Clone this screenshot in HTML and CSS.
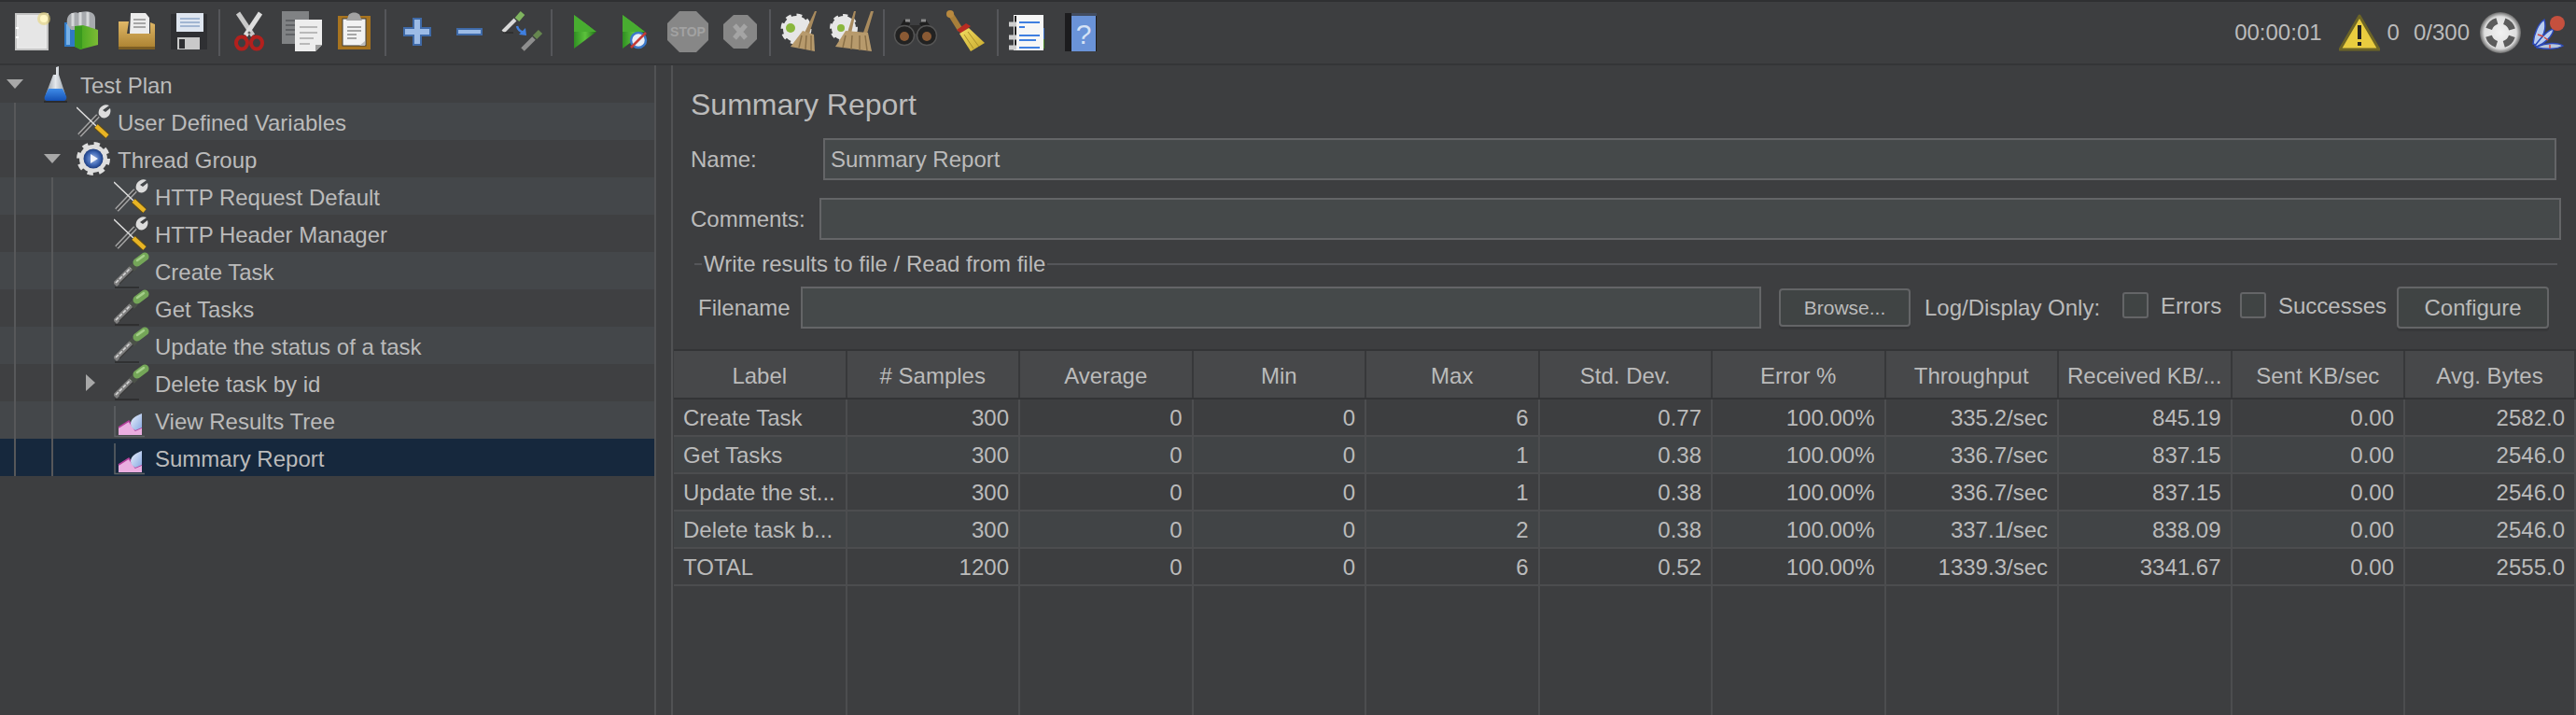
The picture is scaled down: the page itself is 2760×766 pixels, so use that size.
FILE: index.html
```html
<!DOCTYPE html>
<html lang="en">
<head>
<meta charset="utf-8">
<title>Summary Report</title>
<link rel="stylesheet" href="styles.css">
</head>
<body>
<svg class="defs" aria-hidden="true">
<defs>
<linearGradient id="gPlay" x1="0" y1="0" x2="1" y2="0"><stop offset="0" stop-color="#2f8f22"/><stop offset=".5" stop-color="#5cc23c"/><stop offset="1" stop-color="#1f6f18"/></linearGradient>
<linearGradient id="gFolder" x1="0" y1="0" x2="0" y2="1"><stop offset="0" stop-color="#e0b868"/><stop offset="1" stop-color="#a97f2e"/></linearGradient>
<linearGradient id="gGreen" x1="0" y1="0" x2="1" y2="0"><stop offset="0" stop-color="#39a31c"/><stop offset="1" stop-color="#7dbb35"/></linearGradient>
<linearGradient id="gBroom" x1="0" y1="0" x2="1" y2="1"><stop offset="0" stop-color="#f1dd62"/><stop offset="1" stop-color="#c9a92c"/></linearGradient>
<linearGradient id="gGlass" x1="0" y1="0" x2="1" y2="0"><stop offset="0" stop-color="#8f98a2"/><stop offset=".5" stop-color="#e4e8ec"/><stop offset="1" stop-color="#9aa2ab"/></linearGradient>
<linearGradient id="gLiquid" x1="0" y1="0" x2="0" y2="1"><stop offset="0" stop-color="#3f8ce8"/><stop offset="1" stop-color="#1450b4"/></linearGradient>
<linearGradient id="gLeaf" x1="0" y1="0" x2="1" y2="1"><stop offset="0" stop-color="#eef3fc"/><stop offset="1" stop-color="#86a8e2"/></linearGradient>
<radialGradient id="gLaf"><stop offset="0" stop-color="#f2f2f2"/><stop offset=".78" stop-color="#dedede"/><stop offset="1" stop-color="#6a6a6a"/></radialGradient>
<radialGradient id="gHub"><stop offset="0" stop-color="#9db6e6"/><stop offset=".65" stop-color="#3f67b4"/><stop offset="1" stop-color="#1d3d80"/></radialGradient>
<symbol id="wrench" viewBox="0 0 44 40">
<path d="M3 35 L23 14" stroke="#a4a4a4" stroke-width="5" fill="none"/>
<path d="M3 35 L23 14" stroke="#3f4042" stroke-width="2" fill="none"/>
<path d="M35 3 C29 0 22 6 24 13 L27 16 C33 18 38 12 36 6 L31 10 L28 8 Z" fill="#dcdcdc"/>
<path d="M0 5 L21 25" stroke="#e0e0e0" stroke-width="1.5" fill="none"/>
<path d="M21 25 L33 36" stroke="#5e4c18" stroke-width="6.5" fill="none"/>
<path d="M21 25 L33 36" stroke="#e8b424" stroke-width="4.5" fill="none"/>
</symbol>
<symbol id="dropper" viewBox="0 0 44 40">
<path d="M1 38 H27" stroke="#2a2a2a" stroke-width="2" opacity=".75"/>
<path d="M1 35 L20 16" stroke="#7f7f7f" stroke-width="6" fill="none"/>
<path d="M2 33 L19 16" stroke="#d6d6d6" stroke-width="1.6" stroke-dasharray="4 1.5" fill="none"/>
<path d="M6 34 L21 19" stroke="#3a3a3a" stroke-width="1.2" fill="none"/>
<path d="M19 18 L23 14" stroke="#4b5148" stroke-width="8" fill="none"/>
<path d="M25 11 L33 5" stroke="#74a658" stroke-width="9" stroke-linecap="round" fill="none"/>
<path d="M25 9 L32 4" stroke="#a5d08a" stroke-width="2.5" stroke-linecap="round" fill="none"/>
</symbol>
<symbol id="graph" viewBox="0 0 44 40">
<path d="M1 5 V37.5 H33" stroke="#5f6366" stroke-width="1.5" fill="none"/>
<path d="M5 36 V28 L16 21 L23 31 L30 28 V36 Z" fill="#eaaee0"/>
<path d="M5 28 L16 21 L23 31 L30 28" stroke="#b4409c" stroke-width="1.5" fill="none"/>
<path d="M18 24 C18 18 25 15 30 13 V28 L23 31 C20 29 18 27 18 24 Z" fill="url(#gLeaf)"/>
</symbol>
</defs>
</svg>

<header class="toolbar">
<svg class="tool" viewBox="0 0 56 68"><rect x="11" y="15" width="34" height="38" fill="#e8e8e8" stroke="#c4c4c4" stroke-width="2"/><rect x="14" y="18" width="28" height="32" fill="#e6e6e6"/><rect x="11" y="29" width="3" height="2" fill="#fff"/><rect x="11" y="39" width="3" height="2" fill="#fff"/><circle cx="41" cy="20" r="7" fill="#e8d678" opacity=".6"/><circle cx="41" cy="20" r="4" fill="#fff7c4"/></svg>
<svg class="tool" viewBox="0 0 56 68"><rect x="7" y="24" width="18" height="26" fill="#2f78c4"/><rect x="9" y="26" width="4" height="22" fill="#79b1e6"/><path d="M10 26 C8 14 18 12 22 14 C28 11 40 11 40 20 L40 32 L14 32 Z" fill="#a7aaae"/><path d="M16 14 V28 M24 13 V28 M32 13 V28" stroke="#d6d8da" stroke-width="3"/><path d="M18 28 L27 27 L43 32 V48 L24 53 L18 50 Z" fill="url(#gGreen)"/><path d="M18 28 H26 V53 L18 50 Z" fill="#3a9a1e"/></svg>
<svg class="tool" viewBox="0 0 56 68"><path d="M22 14 H38 L42 19 V36 H21 Z" fill="#ececec"/><path d="M25 21 H38 M25 25 H38 M25 29 H38" stroke="#8f8f8f" stroke-width="1.5"/><path d="M9 23 H20 L18 36 H43 V24 L48 26 V53 H9 Z" fill="url(#gFolder)"/><path d="M9 50 H48 V53 H9 Z" fill="#7d5e24"/></svg>
<svg class="tool" viewBox="0 0 56 68"><path d="M9 15 H48 V53 H9 Z" fill="#2f3033"/><rect x="15" y="14" width="29" height="20" fill="#dfe6f0"/><path d="M19 20 H40 M19 24 H40 M19 28 H40" stroke="#8ea6c8" stroke-width="1.5"/><rect x="16" y="40" width="24" height="13" fill="#c9c9c9"/><rect x="18" y="42" width="6" height="10" fill="#2f3033"/></svg>
<i class="sep"></i>
<svg class="tool" viewBox="0 0 56 68"><path d="M15 14 L31 38" stroke="#c9c9c9" stroke-width="5"/><path d="M39 14 L23 38" stroke="#dedede" stroke-width="5"/><circle cx="27" cy="35" r="1.5" fill="#666"/><ellipse cx="19" cy="46" rx="6" ry="6.5" fill="none" stroke="#b3201d" stroke-width="4"/><ellipse cx="35" cy="46" rx="6" ry="6.5" fill="none" stroke="#b3201d" stroke-width="4"/><path d="M24 39 L21 41 M30 39 L33 41" stroke="#b3201d" stroke-width="4"/></svg>
<svg class="tool" viewBox="0 0 56 68"><rect x="6" y="12" width="29" height="35" fill="#808284"/><path d="M10 22 H20 M10 27 H20 M10 32 H20 M10 37 H20" stroke="#606265" stroke-width="2"/><path d="M20 21 H49 V48 L42 55 H20 Z" fill="#ededed"/><path d="M25 29 H44 M25 35 H44 M25 41 H40 M25 47 H36" stroke="#a8a8a8" stroke-width="1.5"/><path d="M49 48 H42 V55 Z" fill="#9c9c9c"/></svg>
<svg class="tool" viewBox="0 0 56 68"><rect x="10" y="17" width="35" height="36" fill="#a8741f"/><rect x="15" y="20" width="25" height="29" fill="#f2f2f2" stroke="#3b3b3b" stroke-width="1"/><path d="M20 29 H35 M20 33 H35 M20 37 H30 M20 41 H30" stroke="#8f8f8f" stroke-width="1.5"/><path d="M21 18 C21 12 34 12 34 18 L36 22 H19 Z" fill="#a2a2a2"/><path d="M39 44 L33 49 H39 Z" fill="#bdbdbd"/></svg>
<i class="sep"></i>
<svg class="tool" viewBox="0 0 56 68"><path d="M25 20 H33 V30 H43 V38 H33 V48 H25 V38 H15 V30 H25 Z" fill="#9cbbe6" stroke="#3f6aa8" stroke-width="2"/></svg>
<svg class="tool" viewBox="0 0 56 68"><rect x="16" y="31" width="26" height="6" fill="#9cbbe6" stroke="#3f6aa8" stroke-width="2"/></svg>
<svg class="tool" viewBox="0 0 56 68"><path d="M9 34 L22 21" stroke="#d9d9d9" stroke-width="4"/><path d="M24 21 L30 14" stroke="#7fb45f" stroke-width="6"/><path d="M9 35 H20" stroke="#2b2b2b" stroke-width="1.5"/><path d="M24 28 C25 32 28 34 31 35" stroke="#3f7fe0" stroke-width="2.5" fill="none"/><path d="M34 38 L26 37 L33 30 Z" fill="#3f7fe0"/><path d="M30 53 L42 41" stroke="#8e8e8e" stroke-width="5"/><path d="M43 40 L49 34" stroke="#66864f" stroke-width="6"/></svg>
<i class="sep"></i>
<svg class="tool" viewBox="0 0 56 68"><path d="M19 16 L43 34 L19 52 Z" fill="url(#gPlay)"/><path d="M19 16 L43 34 H19 Z" fill="#48ad30"/></svg>
<svg class="tool" viewBox="0 0 56 68"><path d="M15 16 L39 34 L15 52 Z" fill="url(#gPlay)"/><path d="M15 16 L39 34 H15 Z" fill="#48ad30"/><circle cx="32" cy="43" r="8" fill="#e8eef6" stroke="#3b78c8" stroke-width="2.5"/><path d="M24 51 L40 35" stroke="#c53b38" stroke-width="2.5"/></svg>
<svg class="tool" viewBox="0 0 56 68"><path d="M20 12 H38 L51 25 V43 L38 56 H20 L7 43 V25 Z" fill="#878787"/><text class="stoptxt" x="29" y="39">STOP</text></svg>
<svg class="tool" viewBox="0 0 56 68"><path d="M22 16 H37 L47 26 V42 L37 52 H22 L11 42 V26 Z" fill="#878787"/><path d="M23 27 L35 41 M35 27 L23 41" stroke="#a4a4a4" stroke-width="5"/></svg>
<i class="sep"></i>
<svg class="tool" viewBox="0 0 56 68"><circle cx="23" cy="31" r="14" fill="#e6e6e6" stroke="#e6e6e6" stroke-width="5" stroke-dasharray="5.5 5.5"/><circle cx="17" cy="30" r="5" fill="#8ab73d"/><path d="M45 12 L37 36 L32 35 L43 12 Z" fill="#a98b5e"/><path d="M30 33 L42 37 L43 55 L17 50 Z" fill="#b79a6c"/><path d="M29 38 L26 51 M34 38 L33 53 M39 38 L39 54" stroke="#8a7048" stroke-width="1.5"/></svg>
<svg class="tool" viewBox="0 0 56 68"><circle cx="18" cy="30" r="13" fill="#e6e6e6" stroke="#e6e6e6" stroke-width="4" stroke-dasharray="5 5"/><circle cx="15" cy="30" r="4" fill="#8ab73d"/><path d="M31 12 L26 36 L22 35 L29 12 Z" fill="#a98b5e"/><path d="M50 12 L43 36 L39 35 L47 12 Z" fill="#a98b5e"/><path d="M20 33 L44 35 L48 55 L9 50 Z" fill="#b79a6c"/><path d="M20 38 L17 51 M27 38 L26 53 M35 38 L35 54 M41 38 L43 54" stroke="#8a7048" stroke-width="1.5"/></svg>
<i class="sep"></i>
<svg class="tool" viewBox="0 0 56 68"><path d="M20 23 L12 36 M36 23 L46 36" stroke="#1f1f1f" stroke-width="8"/><path d="M18 22 H23 M35 22 H40" stroke="#8a8a8a" stroke-width="3"/><rect x="23" y="27" width="12" height="9" fill="#2b2b2b"/><circle cx="17" cy="38" r="10.5" fill="#222" stroke="#555" stroke-width="1.5"/><circle cx="41" cy="38" r="10.5" fill="#222" stroke="#555" stroke-width="1.5"/><circle cx="17" cy="39" r="5" fill="#8a5a34"/><circle cx="41" cy="39" r="5" fill="#8a5a34"/></svg>
<svg class="tool" viewBox="0 0 56 68"><path d="M11 16 L21 32" stroke="#a87f3a" stroke-width="6"/><circle cx="10" cy="15" r="4" fill="#b8893f"/><path d="M17 32 L27 25 L32 28 L22 36 Z" fill="#b82c22"/><path d="M20 36 L30 30 L47 46 L32 55 Z" fill="url(#gBroom)"/><path d="M25 37 L35 52 M29 34 L41 50" stroke="#a98f2a" stroke-width="1"/></svg>
<i class="sep"></i>
<svg class="tool" viewBox="0 0 56 68"><rect x="39" y="30" width="6" height="12" fill="#3a70c8"/><rect x="39" y="42" width="6" height="10" fill="#4c8b2c"/><rect x="12" y="16" width="32" height="38" fill="#f6f6f6"/><rect x="13" y="17" width="2" height="36" fill="#222"/><path d="M7 26 H15 M7 40 H15 M7 51 H15" stroke="#cfcfcf" stroke-width="5"/><path d="M18 24 H40 M18 29 H24 M18 38 H40 M18 43 H36 M18 51 H40" stroke="#3f7fe0" stroke-width="2"/></svg>
<svg class="tool" viewBox="0 0 56 68"><rect x="11" y="14" width="34" height="41" fill="#1c1c1e"/><rect x="18" y="17" width="26" height="38" fill="#6a93d8"/><path d="M11 14 H45 V17 H18 V14" fill="#5b6e8e" opacity=".6"/><text class="helptxt" x="31" y="47">?</text></svg>
<div class="status">
<span class="time">00:00:01</span>
<svg class="warn" viewBox="0 0 44 40"><path d="M22 2 L43 38 H1 Z" fill="#e9cd3f" stroke="#6d6526" stroke-width="3" stroke-linejoin="round"/><rect x="20" y="12" width="4" height="15" fill="#222"/><rect x="20" y="30" width="4" height="4" fill="#222"/></svg>
<span class="cnt">0</span>
<span class="threads">0/300</span>
<svg class="laf" viewBox="0 0 44 44"><circle cx="22" cy="22" r="22" fill="url(#gLaf)"/><circle cx="22" cy="22" r="13" fill="none" stroke="#5c5c5c" stroke-width="7" stroke-dasharray="12.4 8" stroke-dashoffset="-4"/></svg>
<svg class="feather" viewBox="0 0 38 36"><path d="M2 30 C3 18 8 8 14 4 C17 14 12 24 5 31 Z" fill="#b9cdf0" stroke="#2c49b8" stroke-width="1.5"/><path d="M4 32 C10 24 18 15 24 14 C23 22 14 30 6 33 Z" fill="#b9cdf0" stroke="#2c49b8" stroke-width="1.5"/><path d="M6 33 C16 29 28 28 34 32 C28 36 16 36 6 34 Z" fill="#b8c6d8" stroke="#2c49b8" stroke-width="1.5"/><path d="M7 20 L13 22 M14 23 L18 26 M20 31 V35" stroke="#d24a3d" stroke-width="1.5"/><circle cx="28" cy="8" r="8" fill="#c5503e"/></svg>
</div>
</header>

<div class="workspace">
<nav class="tree">
<div class="row plain"><span class="toggle open"></span><svg class="ico" viewBox="0 0 44 40"><path d="M18 2 L21 1 V10 L28 31 H7 L15 10 H18 Z" fill="url(#gGlass)"/><path d="M10 25 H25 L29 33 C30 36 28 38 26 38 H9 C6 38 5 36 6 33 Z" fill="url(#gLiquid)"/><path d="M5 39 H30" stroke="#26262a" stroke-width="1.5"/></svg><span>Test Plan</span></div>
<div class="row alt g1 lv2"><svg class="ico"><use href="#wrench"/></svg><span>User Defined Variables</span></div>
<div class="row plain g1 lv2t"><span class="toggle open"></span><svg class="ico" viewBox="0 0 44 40"><circle cx="18" cy="20" r="15" fill="#dedede" stroke="#dedede" stroke-width="6" stroke-dasharray="5.9 5.9"/><circle cx="18" cy="20" r="10.5" fill="url(#gHub)"/><path d="M15 15 L23 20 L15 25 Z" fill="#f0f3fa"/></svg><span>Thread Group</span></div>
<div class="row alt g2 lv3"><svg class="ico"><use href="#wrench"/></svg><span>HTTP Request Default</span></div>
<div class="row plain g2 lv3"><svg class="ico"><use href="#wrench"/></svg><span>HTTP Header Manager</span></div>
<div class="row alt g2 lv3"><svg class="ico"><use href="#dropper"/></svg><span>Create Task</span></div>
<div class="row plain g2 lv3"><svg class="ico"><use href="#dropper"/></svg><span>Get Tasks</span></div>
<div class="row alt g2 lv3"><svg class="ico"><use href="#dropper"/></svg><span>Update the status of a task</span></div>
<div class="row plain g2 lv3t"><span class="toggle closed"></span><svg class="ico"><use href="#dropper"/></svg><span>Delete task by id</span></div>
<div class="row alt g2 lv3"><svg class="ico"><use href="#graph"/></svg><span>View Results Tree</span></div>
<div class="row selected g2 lv3"><svg class="ico"><use href="#graph"/></svg><span>Summary Report</span></div>
</nav>
<div class="splitter"></div>
<main class="panel">
<h1 class="title">Summary Report</h1>
<div class="field name"><label class="name-label">Name:</label><div class="input">Summary Report</div></div>
<div class="field comments"><label class="comments-label">Comments:</label><div class="input"></div></div>
<div class="legend"><i class="legend-tick"></i><span>Write results to file / Read from file</span><i class="legend-line"></i></div>
<div class="file-row">
<label class="file-label">Filename</label>
<div class="input file-input"></div>
<button class="btn browse">Browse...</button>
<span class="log-label">Log/Display Only:</span>
<span class="check"></span><span class="check-label errors">Errors</span>
<span class="check"></span><span class="check-label">Successes</span>
<button class="btn configure">Configure</button>
</div>
<div class="table">
<div class="thead">
<div>Label</div><div># Samples</div><div>Average</div><div>Min</div><div>Max</div><div>Std. Dev.</div><div>Error %</div><div>Throughput</div><div>Received KB/...</div><div>Sent KB/sec</div><div>Avg. Bytes</div>
</div>
<div class="tr"><div>Create Task</div><div>300</div><div>0</div><div>0</div><div>6</div><div>0.77</div><div>100.00%</div><div>335.2/sec</div><div>845.19</div><div>0.00</div><div>2582.0</div></div>
<div class="tr odd"><div>Get Tasks</div><div>300</div><div>0</div><div>0</div><div>1</div><div>0.38</div><div>100.00%</div><div>336.7/sec</div><div>837.15</div><div>0.00</div><div>2546.0</div></div>
<div class="tr"><div>Update the st...</div><div>300</div><div>0</div><div>0</div><div>1</div><div>0.38</div><div>100.00%</div><div>336.7/sec</div><div>837.15</div><div>0.00</div><div>2546.0</div></div>
<div class="tr odd"><div>Delete task b...</div><div>300</div><div>0</div><div>0</div><div>2</div><div>0.38</div><div>100.00%</div><div>337.1/sec</div><div>838.09</div><div>0.00</div><div>2546.0</div></div>
<div class="tr"><div>TOTAL</div><div>1200</div><div>0</div><div>0</div><div>6</div><div>0.52</div><div>100.00%</div><div>1339.3/sec</div><div>3341.67</div><div>0.00</div><div>2555.0</div></div>
<div class="tr filler"><div></div><div></div><div></div><div></div><div></div><div></div><div></div><div></div><div></div><div></div><div></div></div>
</div>
</main>
</div>
</body>
</html>
```
FILE: styles.css
```css
* { box-sizing: border-box; }
html, body { margin: 0; height: 100%; }
body {
  width: 2760px;
  height: 766px;
  overflow: hidden;
  background: #3d3e40;
  color: #bbbbbb;
  font: 24px/1 "Liberation Sans", Arial, sans-serif;
  display: flex;
  flex-direction: column;
}
.defs { display: block; width: 0; height: 0; }

/* toolbar */
.toolbar {
  flex: none;
  height: 70px;
  display: flex;
  align-items: flex-start;
  padding-left: 6px;
  border-top: 2px solid #2f3032;
  border-bottom: 2px solid #343537;
}
.tool { flex: none; width: 56px; height: 68px; margin-top: -2px; }
.sep { flex: none; width: 2px; height: 50px; margin: 8px 4px 0 4px; background: #55565a; }
.stoptxt { font: bold 14px "Liberation Sans", sans-serif; fill: #a2a2a2; text-anchor: middle; }
.helptxt { font: 30px "Liberation Sans", sans-serif; fill: #d6e2f5; text-anchor: middle; }
.status { margin-left: auto; display: flex; align-items: center; height: 66px; padding-right: 10px; }
.time { margin-right: 18px; }
.warn { width: 44px; height: 40px; margin-right: 8px; }
.cnt { margin-right: 15px; }
.threads { margin-right: 11px; }
.laf { width: 44px; height: 44px; margin-right: 11px; }
.feather { width: 38px; height: 36px; }

/* layout */
.workspace { flex: 1; display: flex; min-height: 0; }
.tree { flex: none; width: 701px; }
.splitter {
  flex: none;
  width: 20px;
  border-left: 2px solid #515254;
  border-right: 2px solid #515254;
}
.panel { flex: 1; min-width: 0; display: flex; flex-direction: column; }

/* tree */
.row {
  height: 40px;
  display: flex;
  align-items: center;
  white-space: nowrap;
  background-repeat: no-repeat;
  padding-left: 7px;
}
.row > span:last-child { padding-top: 3px; }
.plain { background-color: #3f4042; }
.alt { background-color: #44474a; }
.selected { background-color: #16283d; }
.g1 { background-image: linear-gradient(#57585a, #57585a); background-position: 15px 0; background-size: 2px 100%; }
.g2 {
  background-image: linear-gradient(#57585a, #57585a), linear-gradient(#57585a, #57585a);
  background-position: 15px 0, 55px 0;
  background-size: 2px 100%, 2px 100%;
}
.lv2 { padding-left: 82px; }
.lv2t { padding-left: 47px; }
.lv3 { padding-left: 122px; }
.lv3t { padding-left: 92px; }
.ico { flex: none; width: 44px; height: 40px; }
.toggle { flex: none; width: 35px; display: flex; }
.toggle.open::before {
  content: "";
  border-left: 9px solid transparent;
  border-right: 9px solid transparent;
  border-top: 10px solid #a8a8a8;
}
.toggle.closed { width: 30px; }
.toggle.closed::before {
  content: "";
  border-top: 9px solid transparent;
  border-bottom: 9px solid transparent;
  border-left: 10px solid #a8a8a8;
}

/* form */
.title { margin: 24px 0 0 19px; height: 36px; line-height: 36px; font-size: 32px; font-weight: normal; }
.field { display: flex; align-items: center; height: 45px; padding-left: 19px; }
.name { margin-top: 18px; padding-right: 21px; }
.comments { margin-top: 19px; padding-right: 16px; }
.name-label { flex: none; width: 142px; }
.comments-label { flex: none; width: 138px; }
.input {
  flex: 1;
  height: 45px;
  display: flex;
  align-items: center;
  padding-left: 6px;
  background: #45494a;
  border: 2px solid #646567;
}
.legend { display: flex; align-items: center; height: 24px; margin: 14px 20px 0 23px; }
.legend-tick { flex: none; width: 8px; height: 2px; margin-right: 2px; background: #55565a; }
.legend-line { flex: 1; height: 2px; margin-left: 2px; background: #55565a; }
.file-row { display: flex; align-items: center; height: 45px; margin-top: 12px; padding-left: 27px; }
.file-label { flex: none; width: 110px; }
.file-input { flex: none; width: 1029px; }
.btn {
  flex: none;
  padding: 0;
  color: #bbbbbb;
  font-family: inherit;
  background: #404444;
  border: 2px solid #646567;
  border-radius: 4px;
  box-shadow: 0 3px 0 #37383a;
}
.browse { width: 141px; height: 41px; margin-left: 19px; font-size: 21px; }
.log-label { flex: none; margin-left: 15px; width: 212px; }
.check {
  flex: none;
  width: 28px;
  height: 28px;
  margin-top: -6px;
  background: #404444;
  border: 2px solid #646567;
  border-radius: 3px;
}
.check-label { flex: none; margin: -4px 0 0 13px; }
.errors { width: 85px; }
.check-label:not(.errors) { width: 127px; }
.configure { width: 163px; height: 45px; font-size: 24px; }

/* table */
.table { flex: 1; min-height: 0; display: flex; flex-direction: column; margin: 22px 0 0 1px; border-top: 2px solid #333436; }
.thead, .tr { display: grid; grid-template-columns: repeat(10, 185.5px) 1fr; flex: none; }
.thead {
  height: 52px;
  background: #47484a;
  border-bottom: 2px solid #333436;
}
.thead > div {
  display: flex;
  align-items: center;
  justify-content: center;
  padding-top: 3px;
  border-right: 2px solid #37383a;
  white-space: nowrap;
}
.tr { height: 40px; border-bottom: 2px solid #4c4d4f; background: #3d3e40; }
.tr.odd { background: #414446; }
.tr > div {
  display: flex;
  align-items: center;
  justify-content: flex-end;
  padding: 2px 10px 0;
  border-right: 2px solid #4c4d4f;
  white-space: nowrap;
}
.tr > div:first-child { justify-content: flex-start; }
.tr.filler { flex: 1; border-bottom: 0; }
```
